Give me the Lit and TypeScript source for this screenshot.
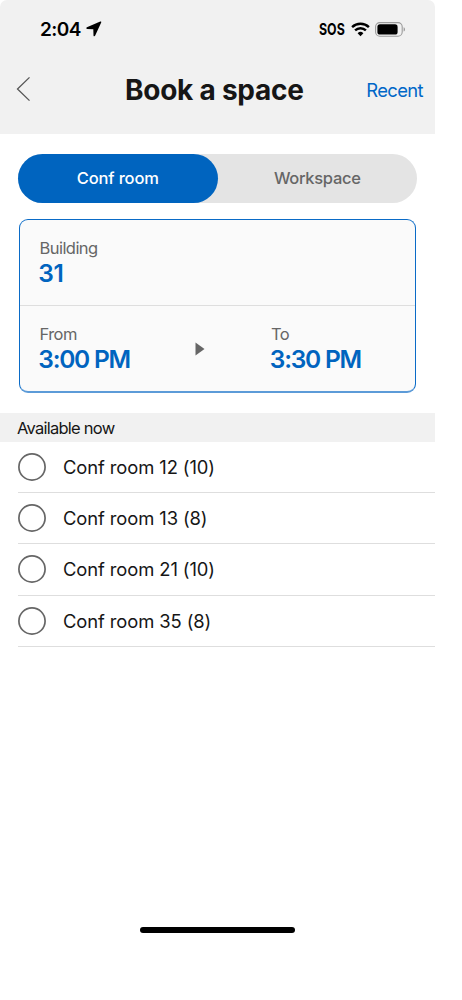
import { LitElement, html, css } from "lit";
import { customElement, state } from "lit/decorators.js";

@customElement("status-bar")
class StatusBar extends LitElement {
  static styles = css`
    :host { display: flex; height: 59px; padding: 0 29px 0 40px; align-items: center; justify-content: space-between; box-sizing: border-box; color: #000; }
    .left, .right { display: flex; align-items: center; }
    .time { font-size: 19px; font-weight: 600; letter-spacing: -0.6px; line-height: 24px; }
    .arrow { margin-left: 5px; margin-top: -1px; }
    .sos { font-size: 16.5px; font-weight: 700; line-height: 24px; width: 26px; margin-top: -1px; }
    .sos span { display: inline-block; transform: scaleX(0.75); transform-origin: left; }
    .wifi { margin-left: 6px; }
    .battery { margin-left: 5px; }
    svg { display: block; }
  `;
  render() {
    return html`
      <div class="left">
        <span class="time">2:04</span>
        <svg class="arrow" width="16" height="16" viewBox="0 0 16 16">
          <path d="M14.3.6.9 6.3c-.9.4-.7 1.6.3 1.7l6.1.3.2 6.1c0 1 1.3 1.2 1.7.2L15.2 1.6c.3-.8-.2-1.2-.9-1z" fill="#000" />
        </svg>
      </div>
      <div class="right">
        <span class="sos"><span>SOS</span></span>
        <svg class="wifi" width="19" height="15" viewBox="0 0 19 15">
          <g fill="none" stroke="#000" stroke-width="2.4">
            <path d="M1.1 5.2a12 12 0 0 1 16.8 0" />
            <path d="M4.1 8.4a7.7 7.7 0 0 1 10.8 0" />
          </g>
          <path d="M9.5 14.2 6.6 11.2a4.2 4.2 0 0 1 5.8 0z" fill="#000" />
        </svg>
        <svg class="battery" width="31" height="15" viewBox="0 0 31 15">
          <rect x=".6" y=".6" width="26.6" height="13.6" rx="4.2" fill="none" stroke="#9b9b9b" stroke-width="1.1" />
          <rect x="2.4" y="2.3" width="20.2" height="10.2" rx="2.6" fill="#000" />
          <path d="M28.6 5.2c1.9.7 1.9 3.7 0 4.4z" fill="#9b9b9b" />
        </svg>
      </div>
    `;
  }
}

@customElement("room-row")
class RoomRow extends LitElement {
  static properties = { label: {}, selected: { type: Boolean } };
  declare label: string;
  declare selected: boolean;
  static styles = css`
    :host { display: flex; align-items: center; height: 51.35px; margin-left: 18px; box-sizing: border-box; border-bottom: 1px solid #dedede; cursor: pointer; }
    .radio { width: 28px; height: 28px; flex: none; display: block; }
    .label { margin-left: 17px; font-size: 18.4px; letter-spacing: -0.1px; line-height: 24px; color: #161616; white-space: nowrap; }
  `;
  render() {
    return html`
      <svg class="radio" viewBox="0 0 28 28">
        <circle cx="14" cy="14" r="13.1" fill="none" stroke="#666" stroke-width="1.7" />
        ${this.selected ? html`<svg><circle cx="14" cy="14" r="7" fill="#0064bf" /></svg>` : ""}
      </svg>
      <span class="label">${this.label}</span>
    `;
  }
}

@customElement("app-root")
class AppRoot extends LitElement {
  @state() private tab = 0;
  @state() private room = -1;

  private rooms = ["Conf room 12 (10)", "Conf room 13 (8)", "Conf room 21 (10)", "Conf room 35 (8)"];

  static styles = css`
    :host { display: block; min-height: 1000px; background: #fff; font-family: Inter, "Liberation Sans", sans-serif; }
    .phone { display: flex; flex-direction: column; width: 435px; height: 942px; }
    .top { height: 134px; background: #f1f1f1; border-radius: 7px 7px 0 0; flex: none; }
    .nav { display: grid; grid-template-columns: 109px 1fr auto; align-items: center; height: 62px; padding: 0 12px 0 16px; }
    .back { display: block; margin-top: -2px; }
    .title { margin: 0; font-size: 28px; font-weight: 700; letter-spacing: -0.25px; line-height: 34px; color: #161616; white-space: nowrap; }
    .recent { font-size: 18.4px; letter-spacing: -0.6px; line-height: 24px; color: #0067c8; }
    .tabs { display: flex; margin: 20px 18px 0; height: 49px; border-radius: 25px; background: #e4e4e4; flex: none; }
    .tab { flex: 1; display: flex; align-items: center; justify-content: center; box-sizing: border-box; padding-bottom: 1px; border-radius: 25px; font-size: 16.5px; font-weight: 500; letter-spacing: -0.15px; color: #666; cursor: pointer; }
    .tab + .tab { letter-spacing: -0.3px; }
    .tab.on { background: #0064bf; color: #fff; }
    .card { margin: 16px 19px 0; height: 174px; box-sizing: border-box; border: 1px solid #0a6bc7; border-bottom: 2px solid #5c9bd8; border-radius: 9px; background: #fafafa; flex: none; }
    .line { height: 85px; box-sizing: border-box; padding: 17px 19px 0; display: grid; grid-template-columns: 156px 75.5px 1fr; }
    .line + .line { border-top: 1px solid #dedede; }
    .name { font-size: 16.5px; letter-spacing: -0.55px; line-height: 22px; color: #666; padding-left: 0.5px; }
    .value { font-size: 24.5px; font-weight: 600; letter-spacing: -1.25px; line-height: 28px; margin-left: -0.7px; color: #0064bf; white-space: nowrap; }
    .value.number { letter-spacing: -0.4px; }
    .play { display: block; margin-top: 19px; }
    .section { margin-top: 19.6px; height: 29px; padding-left: 17px; background: #f1f1f1; font-size: 16.5px; letter-spacing: -0.75px; line-height: 30px; color: #161616; flex: none; }
    .home { width: 155px; height: 6px; margin: auto auto 9px 140px; border-radius: 3px; background: #000; }
  `;

  render() {
    return html`
      <div class="phone">
        <header class="top">
          <status-bar></status-bar>
          <nav class="nav">
            <svg class="back" width="16" height="26" viewBox="0 0 16 26">
              <path d="M13.5 1.4 1.5 13l12 11.6" fill="none" stroke="#555" stroke-width="1.3" />
            </svg>
            <h1 class="title">Book a space</h1>
            <span class="recent">Recent</span>
          </nav>
        </header>
        <div class="tabs">
          ${["Conf room", "Workspace"].map(
            (t, i) => html`<div class="tab ${this.tab === i ? "on" : ""}" @click=${() => (this.tab = i)}>${t}</div>`
          )}
        </div>
        <section class="card">
          <div class="line">
            <div><div class="name">Building</div><div class="value number">31</div></div>
          </div>
          <div class="line">
            <div><div class="name">From</div><div class="value">3:00 PM</div></div>
            <svg class="play" width="10" height="14" viewBox="0 0 10 14"><path d="M.5.5 9.5 7l-9 6.5z" fill="#666" /></svg>
            <div><div class="name">To</div><div class="value">3:30 PM</div></div>
          </div>
        </section>
        <div class="section">Available now</div>
        ${this.rooms.map(
          (r, i) => html`<room-row .label=${r} .selected=${this.room === i} @click=${() => (this.room = i)}></room-row>`
        )}
        <div class="home"></div>
      </div>
    `;
  }
}
